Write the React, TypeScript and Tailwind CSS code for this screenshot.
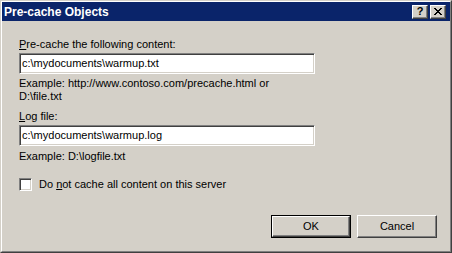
export default function App() {
  return (
    <div
      className="w-[452px] h-[253px] bg-[#d4d0c8] border border-t-[#d4d0c8] border-l-[#d4d0c8] border-r-[#404040] border-b-[#404040] text-black text-[11px] leading-[13px]"
      style={{ fontFamily: '"Liberation Sans", Arial, sans-serif' }}
    >
      <div className="h-full flex flex-col border border-t-white border-l-white border-r-[#808080] border-b-[#808080]">
        {/* Title bar */}
        <div className="h-[19px] bg-[#0a246a] flex items-center pl-[2px] pr-[4px]">
          <span className="text-white font-bold text-[12px] leading-[14px] flex-1">Pre-cache Objects</span>
          <div className="flex gap-[2px]">
            <CaptionButton>
              <span className="font-bold text-[11px] leading-none">?</span>
            </CaptionButton>
            <CaptionButton>
              <svg width="8" height="7" viewBox="0 0 8 7" shapeRendering="crispEdges">
                <path d="M0 0h2v1h-2zM6 0h2v1h-2zM1 1h2v1h-2zM5 1h2v1h-2zM2 2h4v1h-4zM3 3h2v1h-2zM2 4h4v1h-4zM1 5h2v1h-2zM5 5h2v1h-2zM0 6h2v1h-2zM6 6h2v1h-2z" fill="#000" />
              </svg>
            </CaptionButton>
          </div>
        </div>

        {/* Content */}
        <div className="flex flex-col pl-[17px] pr-[13px] pt-[17px]">
          <div>
            <u>P</u>re-cache the following content:
          </div>
          <TextBox value="c:\mydocuments\warmup.txt" className="mt-[2px]" />
          <div className="mt-[3px]">
            Example: http://www.contoso.com/precache.html or
            <br />
            D:\file.txt
          </div>

          <div className="mt-[7px]">
            <u>L</u>og file:
          </div>
          <TextBox value="c:\mydocuments\warmup.log" className="mt-[2px]" />
          <div className="mt-[4px]">Example: D:\logfile.txt</div>

          <div className="mt-[15px] flex items-center gap-[7px]">
            <div className="w-[13px] h-[13px] bg-white border border-t-[#808080] border-l-[#808080] border-r-white border-b-white shadow-[inset_1px_1px_0_#404040,inset_-1px_-1px_0_#d4d0c8]" />
            <span>
              Do <u>n</u>ot cache all content on this server
            </span>
          </div>

          <div className="mt-[24px] flex justify-end gap-[6px]">
            <PushButton isDefault>OK</PushButton>
            <PushButton>Cancel</PushButton>
          </div>
        </div>
      </div>
    </div>
  );
}

function CaptionButton({ children }: { children: React.ReactNode }) {
  return (
    <div className="w-[16px] h-[14px] bg-[#d4d0c8] border border-t-white border-l-white border-r-[#404040] border-b-[#404040] shadow-[inset_-1px_-1px_0_#808080] flex items-center justify-center">
      {children}
    </div>
  );
}

function TextBox({ value, className = '' }: { value: string; className?: string }) {
  return (
    <div
      className={
        'w-[296px] h-[21px] bg-white border border-t-[#808080] border-l-[#808080] border-r-white border-b-white shadow-[inset_1px_1px_0_#404040,inset_-1px_-1px_0_#d4d0c8] flex items-center pl-[2px] ' +
        className
      }
    >
      {value}
    </div>
  );
}

function PushButton({ children, isDefault = false }: { children: React.ReactNode; isDefault?: boolean }) {
  if (isDefault) {
    return (
      <div className="w-[80px] h-[23px] border border-black">
        <div className="w-full h-full border border-t-white border-l-white border-r-[#404040] border-b-[#404040] shadow-[inset_-1px_-1px_0_#808080] flex items-center justify-center">
          {children}
        </div>
      </div>
    );
  }
  return (
    <div className="w-[80px] h-[23px] border border-t-white border-l-white border-r-[#404040] border-b-[#404040] shadow-[inset_-1px_-1px_0_#808080] flex items-center justify-center">
      {children}
    </div>
  );
}
